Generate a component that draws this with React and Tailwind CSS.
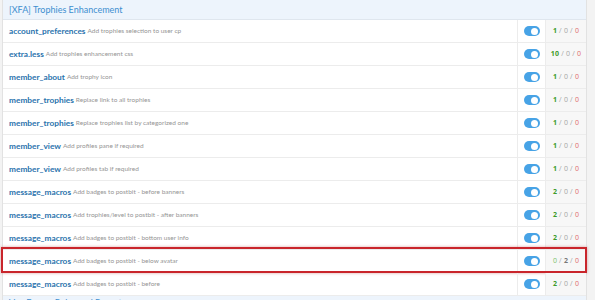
import React from "react";

const rows = [
  { name: "account_preferences", desc: "Add trophies selection to user cp", count: [1, 0, 0] },
  { name: "extra.less", desc: "Add trophies enhancement css", count: [10, 0, 0] },
  { name: "member_about", desc: "Add trophy icon", count: [1, 0, 0] },
  { name: "member_trophies", desc: "Replace link to all trophies", count: [1, 0, 0] },
  { name: "member_trophies", desc: "Replace trophies list by categorized one", count: [1, 0, 0] },
  { name: "member_view", desc: "Add profiles pane if required", count: [1, 0, 0] },
  { name: "member_view", desc: "Add profiles tab if required", count: [1, 0, 0] },
  { name: "message_macros", desc: "Add badges to postbit - before banners", count: [2, 0, 0] },
  { name: "message_macros", desc: "Add trophies/level to postbit - after banners", count: [2, 0, 0] },
  { name: "message_macros", desc: "Add badges to postbit - bottom user info", count: [2, 0, 0] },
  { name: "message_macros", desc: "Add badges to postbit - below avatar", count: [0, 2, 0], marked: true },
  { name: "message_macros", desc: "Add badges to postbit - before", count: [2, 0, 0] },
];

const Toggle = () => (
  <span className="relative inline-block w-[16px] h-[10px] rounded-full bg-[#47a3e6]">
    <span className="absolute right-[1.5px] top-[1.5px] w-[7px] h-[7px] rounded-full bg-white" />
  </span>
);

const Counts = ({ count }) => {
  const [a, b, c] = count;
  return (
    <span className="text-[7px] text-[#a5a5a5] tracking-[0.2px] font-['Open_Sans',sans-serif]">
      <span className={a > 0 ? "font-bold text-[#3d9a28]" : "text-[#7cc06a]"}>{a}</span>
      {" / "}
      <span className={b > 0 ? "font-bold text-[#777]" : ""}>{b}</span>
      {" / "}
      <span className="text-[#e06b6b]">{c}</span>
    </span>
  );
};

export default function App() {
  return (
    <div className="w-[595px] h-[300px] overflow-hidden bg-[#f3f3f3] font-['Lato',sans-serif]">
      <div className="ml-[2px] w-[585px] bg-white border-x border-[#e2e2e2]">
        <div className="h-[20px] flex items-center px-[6px] bg-[#edf4fc] border-b border-[#dfe6ee] text-[9px] text-[#3d8fd0]">
          [XFA] Trophies Enhancement
        </div>
        {rows.map((row, i) => (
          <div key={i} className="relative h-[23px] flex border-b border-[#ececec]">
            <div className="flex-1 flex items-center px-[6px] gap-[2px] whitespace-nowrap">
              <span className="text-[8.3px] font-bold text-[#2a73ad]">{row.name}</span>
              <span className="text-[6.5px] text-[#959595]">{row.desc}</span>
            </div>
            <div className="w-[28px] flex items-center justify-center border-l border-[#ececec]">
              <Toggle />
            </div>
            <div className="w-[41px] flex items-center justify-center bg-[#f7f7f7] border-l border-[#ececec]">
              <Counts count={row.count} />
            </div>
            {row.marked && (
              <div className="absolute -left-[2px] -right-[1px] -top-[3px] -bottom-[1px] border-2 border-[#c9252b] shadow-[0_0_3px_rgba(160,0,0,0.35)]" />
            )}
          </div>
        ))}
        <div className="h-[20px] flex items-start pt-[2px] px-[6px] bg-[#edf4fc] text-[9px] leading-[10px] text-[#3d8fd0]">
          Van Form - Rules and Report
        </div>
      </div>
    </div>
  );
}
